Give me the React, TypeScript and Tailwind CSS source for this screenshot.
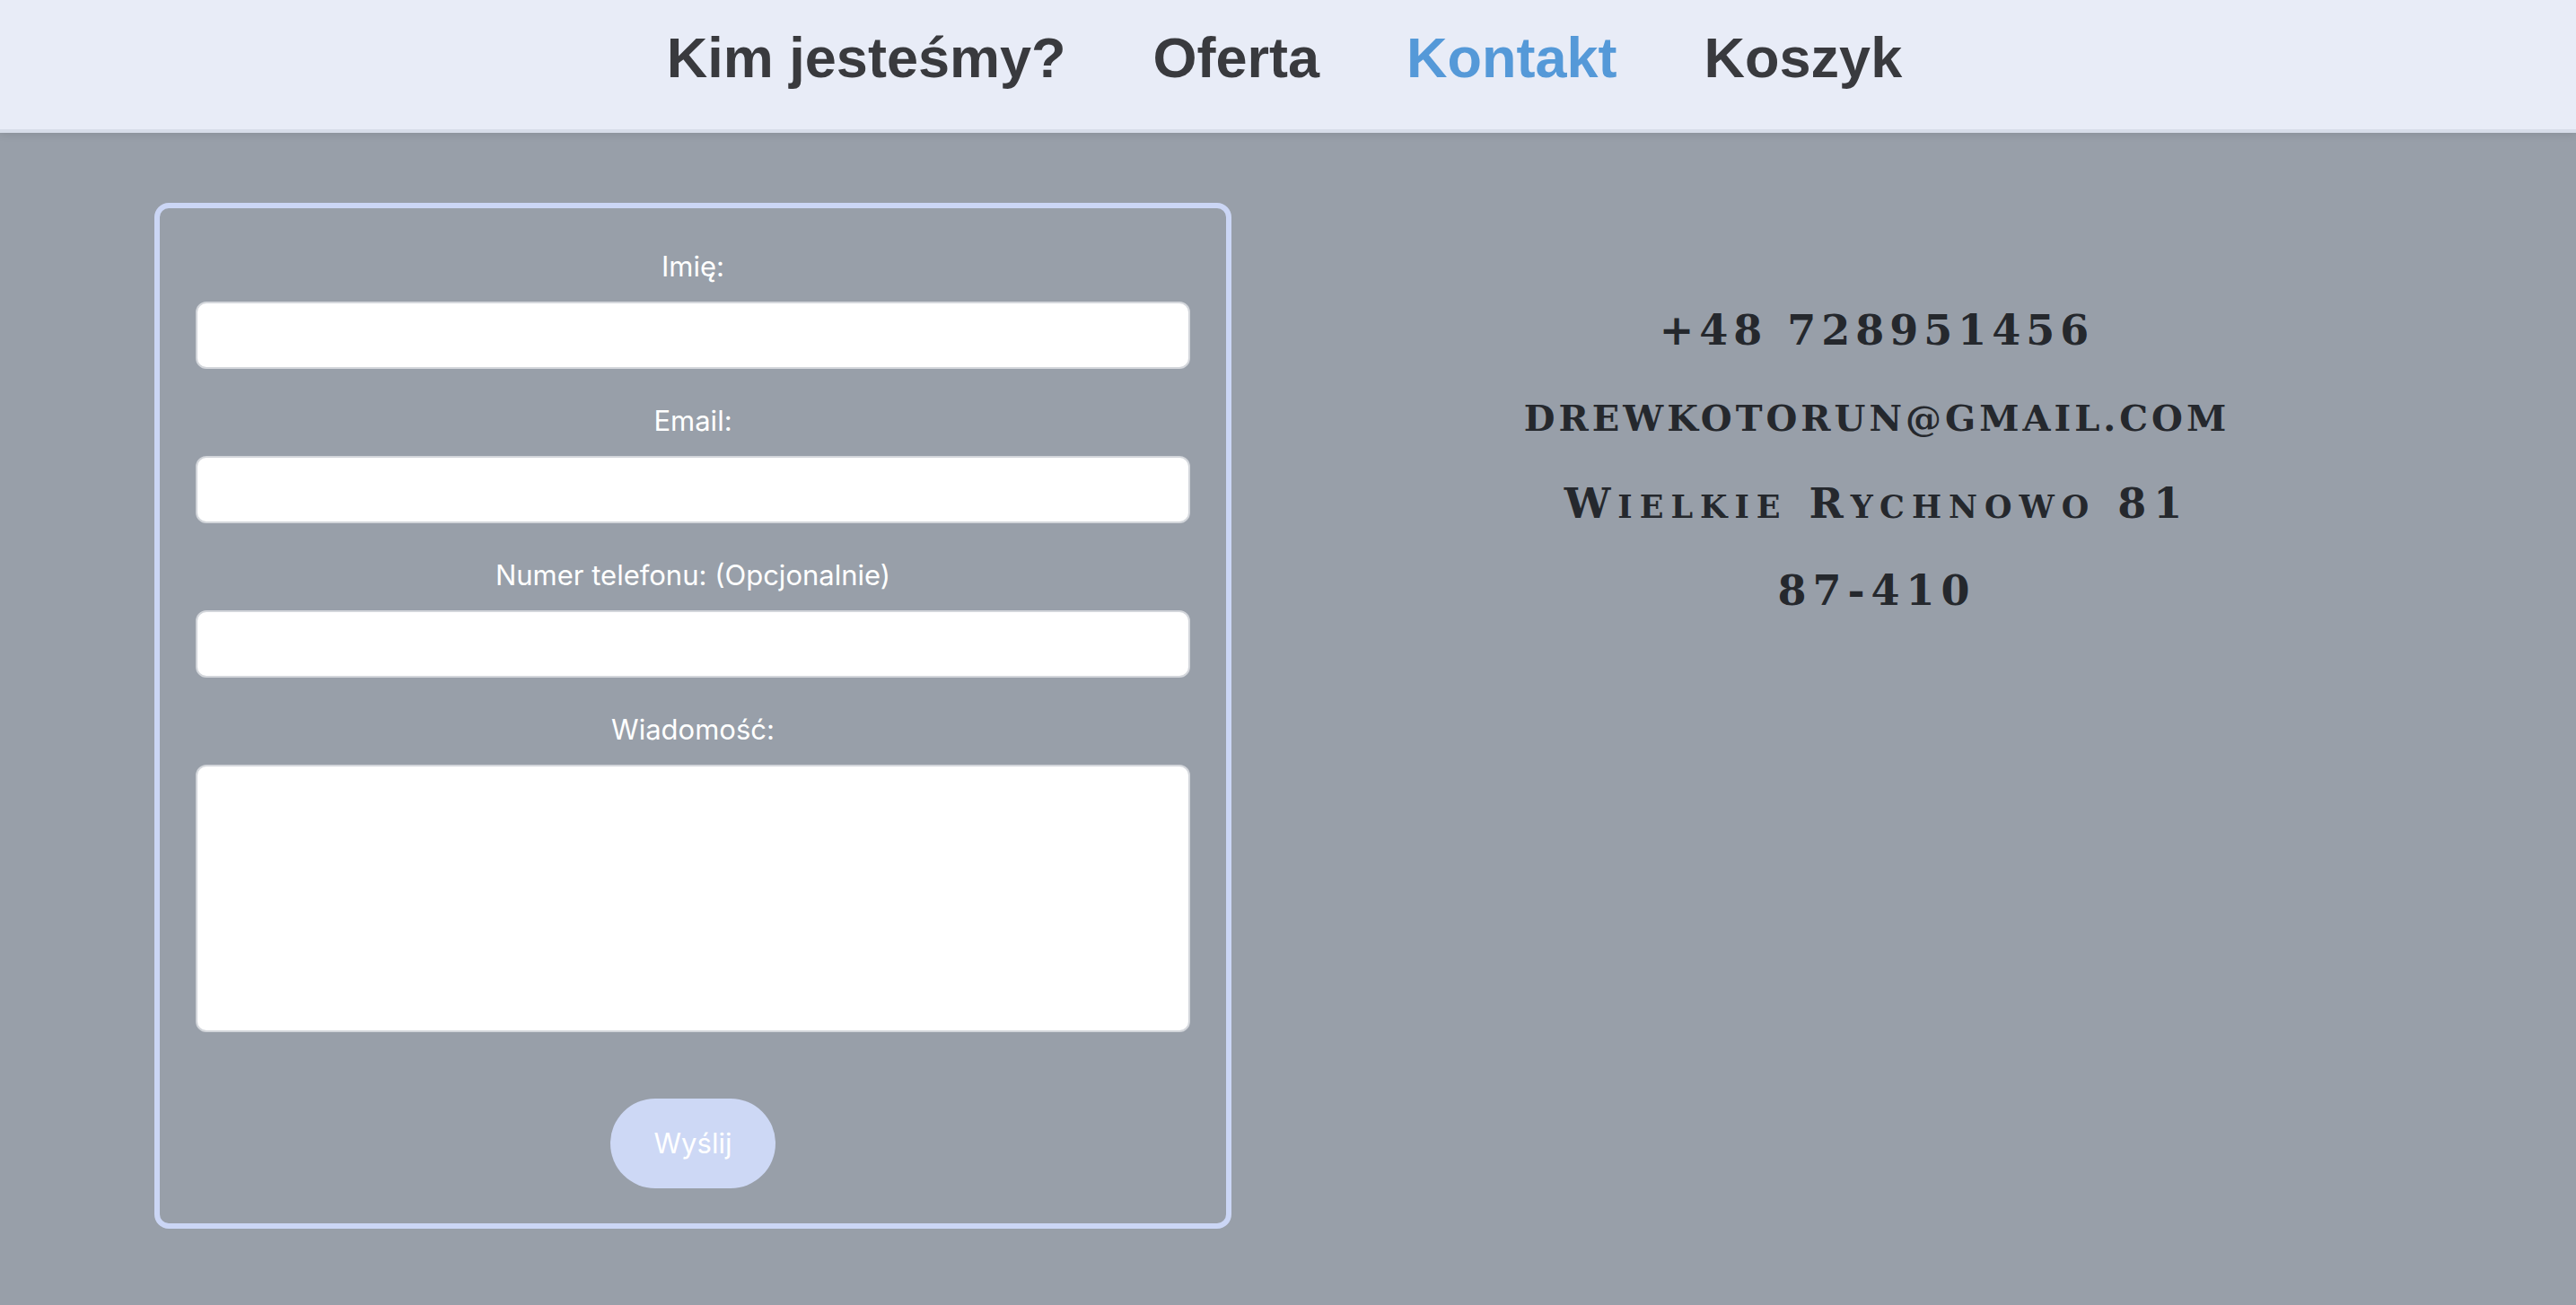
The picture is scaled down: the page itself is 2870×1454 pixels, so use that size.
import { useState } from 'react'

const links = [
  { label: 'Kim jesteśmy?', active: false },
  { label: 'Oferta', active: false },
  { label: 'Kontakt', active: true },
  { label: 'Koszyk', active: false },
]

function Field({ label, area }: { label: string; area?: boolean }) {
  const [value, setValue] = useState('')
  return (
    <div className="w-full flex flex-col items-center">
      <label className="text-[31px] leading-[37px] text-white">{label}</label>
      {area ? (
        <textarea
          value={value}
          onChange={(e) => setValue(e.target.value)}
          className="mt-[21px] w-full h-[298px] rounded-[12px] border-2 border-[#d3d6db] bg-white resize-none outline-none"
        />
      ) : (
        <input
          value={value}
          onChange={(e) => setValue(e.target.value)}
          className="mt-[21px] w-full h-[75px] rounded-[12px] border-2 border-[#d3d6db] bg-white outline-none"
        />
      )}
    </div>
  )
}

export default function App() {
  return (
    <div className="min-h-screen bg-[#989fa9] font-['Liberation_Sans',Arial,sans-serif]">
      {/* Nawigacja */}
      <nav className="h-[148px] bg-[#e8ecf7] border-b-4 border-[#d7dde9] shadow-[0_3px_8px_rgba(0,0,0,0.08)] flex justify-center gap-[97px] pt-[29px] pr-[8px]">
        {links.map((l) => (
          <a
            key={l.label}
            href="#"
            className={`text-[63px] leading-[71px] font-bold ${l.active ? 'text-[#5599d8]' : 'text-[#393a3e]'}`}
          >
            {l.label}
          </a>
        ))}
      </nav>

      <main className="flex pt-[78px] pl-[172px]">
        {/* Formularz */}
        <form
          onSubmit={(e) => e.preventDefault()}
          className="w-[1200px] h-[1143px] border-[6px] border-[#cbd6f5] rounded-[16px] px-[40px] pt-[46px] flex flex-col items-center gap-[39px] font-['Inter',sans-serif]"
        >
          <Field label="Imię:" />
          <Field label="Email:" />
          <Field label="Numer telefonu: (Opcjonalnie)" />
          <Field label="Wiadomość:" area />
          <button
            type="submit"
            className="mt-[35px] w-[184px] h-[100px] rounded-full bg-[#cdd8f5] text-white text-[31px]"
          >
            Wyślij
          </button>
        </form>

        {/* Dane kontaktowe */}
        <div className="flex-1 mr-[60px] pt-[94px] text-center text-[#25282d] font-['DejaVu_Serif',serif] font-bold text-[46px] leading-[96px]">
          <p className="tracking-[6px]">+48 728951456</p>
          <p className="text-[40px] uppercase tracking-[4px] leading-[100px]">drewkotorun@gmail.com</p>
          <p className="tracking-[8px] leading-[90px]">
            W<span className="text-[35px] uppercase">ielkie</span> R
            <span className="text-[35px] uppercase">ychnowo</span> 81
          </p>
          <p className="tracking-[7px]">87-410</p>
        </div>
      </main>
    </div>
  )
}
